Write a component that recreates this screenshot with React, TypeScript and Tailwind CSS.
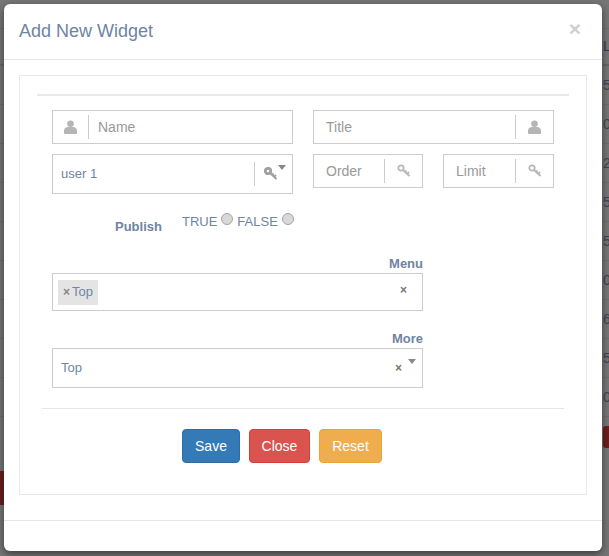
const ink = "text-[#6f84a3]";

const strip = ["5", "0", "2", "5", "5", "0", "6", "5", "0"];

function PersonIcon() {
  return (
    <svg width="13" height="14" viewBox="0 0 13 14" fill="#b5b5b5">
      <circle cx="6.5" cy="3.800" r="3.300" />
      <path d="M0 13v-2.500C0 8.500 1.500 7.700 3.500 7h6c2 .7 3.500 1.500 3.500 3.500V13a1 1 0 0 1-1 1H1a1 1 0 0 1-1-1z" />
    </svg>
  );
}

function KeyIcon({ dark }: { dark?: boolean }) {
  const c = dark ? "#a0a0a0" : "#b8b8b8";
  return (
    <svg width="14" height="14" viewBox="0 0 14 14" fill="none" stroke={c}>
      <circle cx="4" cy="4" r="2.700" strokeWidth={dark ? 2.800 : 1.800} />
      <path d="M6 6l6.500 6M10 10l2-2M8 8l1.500-1.500" strokeWidth="2" />
    </svg>
  );
}

function Caret() {
  return <span className="w-0 h-0 border-x-[4px] border-x-transparent border-t-[5px] border-t-[#888888]" />;
}

function IconInput({ label, width, icon, left }: { label: string; width: string; icon: React.ReactNode; left?: boolean }) {
  return (
    <div className={`${width} h-[34px] border border-[#cccccc] bg-white flex items-center`}>
      {left && <div className="w-[36px] h-[24px] border-r border-[#cccccc] flex items-center justify-center">{icon}</div>}
      <span className={`flex-1 text-[14px] text-[#999999] ${left ? "pl-[9px]" : "pl-[12px]"}`}>{label}</span>
      {!left && <div className="w-[38px] h-[24px] border-l border-[#cccccc] flex items-center justify-center">{icon}</div>}
    </div>
  );
}

export default function App() {
  return (
    <div className="relative w-[609px] h-[556px] bg-[#767676] overflow-hidden" style={{ fontFamily: '"Liberation Sans", Arial, sans-serif' }}>
      {/* page behind the modal, only the edges show */}
      <div className="flex justify-between">
        <div className="w-[8px]">
          <div className="h-[29px] border-b border-[#6c6c6c]" />
          <div className="h-[37px] border-b-2 border-[#666666]" />
          {strip.map((_, i) => (
            <div key={i} className="h-[39px] border-b border-[#6c6c6c]" />
          ))}
          <div className="h-[54px]" />
          <div className="h-[34px] bg-[#6b1f1d]" />
        </div>
        <div className="w-[6px] text-[14px] text-[#2f3b52] font-medium">
          <div className="h-[29px] border-b border-[#6c6c6c]" />
          <div className="h-[37px] border-b-2 border-[#666666] flex items-center">L</div>
          {strip.map((n, i) => (
            <div key={i} className="h-[39px] border-b border-[#6c6c6c] flex items-center text-[#3c4658]">{n}</div>
          ))}
          <div className="h-[9px]" />
          <div className="h-[22px] w-[12px] rounded-l-[3px] bg-[#6e1f1c]" />
        </div>
      </div>
      <div className="absolute left-[4px] top-[4px] w-[598px] h-[547px] bg-white rounded-[6px] shadow-[0_3px_9px_rgba(0,0,0,0.5)] flex flex-col">
        <header className="h-[56px] border-b border-[#e5e5e5] flex items-center justify-between pl-[15px] pr-[21px] shrink-0">
          <h4 className={`text-[18px] ${ink}`}>Add New Widget</h4>
          <span className="text-[21px] font-bold text-[#cfcfcf] leading-none -mt-[6px]">×</span>
        </header>
        <main className="h-[460px] shrink-0 px-[15px] pt-[15px]">
          <section className="h-[420px] border border-[#e7e7ee] px-[17px] pt-[18px]">
            <hr className="border-t-2 border-[#e6e9ee]" />
            <div className="pl-[15px] pt-[14px]">
              <div className="flex gap-[20px]">
                <IconInput label="Name" width="w-[241px]" icon={<PersonIcon />} left />
                <IconInput label="Title" width="w-[241px]" icon={<PersonIcon />} />
              </div>
              <div className="flex gap-[20px] mt-[10px] items-start">
                <div className="w-[241px] h-[40px] border border-[#cccccc] flex items-center relative">
                  <span className={`flex-1 pl-[8px] text-[13px] ${ink}`}>user 1</span>
                  <div className="w-[38px] h-[24px] border-l border-[#cccccc] flex items-center pl-[9px]"><KeyIcon dark /></div>
                  <span className="absolute right-[6px] top-[10px] flex"><Caret /></span>
                </div>
                <IconInput label="Order" width="w-[110px]" icon={<KeyIcon />} />
                <IconInput label="Limit" width="w-[111px]" icon={<KeyIcon />} />
              </div>
              <div className="flex mt-[19px] h-[30px]">
                <b className={`ml-[63px] mt-[4px] text-[13px] ${ink}`}>Publish</b>
                <div className={`ml-[20px] flex items-start gap-[4px] text-[13px] leading-[17px] ${ink}`}>
                  <span>TRUE</span>
                  <span className="w-[12px] h-[12px] rounded-full bg-[#d8d8d8] border border-[#a5a5a5]" />
                  <span>FALSE</span>
                  <span className="w-[12px] h-[12px] rounded-full bg-[#d8d8d8] border border-[#a5a5a5]" />
                </div>
              </div>
              <div className="w-[371px]">
                <div className={`text-right text-[13px] leading-[15px] font-bold ${ink} mt-[13px] mb-[2px]`}>Menu</div>
                <div className="h-[38px] border border-[#cccccc] flex items-center pl-[5px] pr-[15px] justify-between">
                  <span className={`h-[25px] w-[40px] bg-[#e4e4e4] text-[13px] ${ink} flex items-center pl-[5px] gap-[2px]`}>
                    <span className="text-[#888888] font-bold text-[12px]">×</span>Top
                  </span>
                  <span className="text-[12px] font-bold text-[#777777] mb-[4px]">×</span>
                </div>
                <div className={`text-right text-[13px] leading-[15px] font-bold ${ink} mt-[20px] mb-[2px]`}>More</div>
                <div className="h-[40px] border border-[#cccccc] flex items-center pl-[8px] relative">
                  <span className={`text-[13px] ${ink}`}>Top</span>
                  <span className="absolute right-[20px] top-[10px] text-[12px] font-bold text-[#777777]">×</span>
                  <span className="absolute right-[6px] top-[10px] flex"><Caret /></span>
                </div>
              </div>
            </div>
            <hr className="border-[#e5e5e5] mx-[5px] mt-[20px]" />
            <div className="flex justify-center gap-[9px] mt-[20px] mr-[42px]">
              <button className="h-[34px] w-[58px] rounded-[4px] bg-[#337ab7] border border-[#2e6da4] text-white text-[14px]">Save</button>
              <button className="h-[34px] w-[61px] rounded-[4px] bg-[#d9534f] border border-[#d43f3a] text-white text-[14px]">Close</button>
              <button className="h-[34px] w-[63px] rounded-[4px] bg-[#f0ad4e] border border-[#eea236] text-white text-[14px]">Reset</button>
            </div>
          </section>
        </main>
        <footer className="flex-1 border-t border-[#e5e5e5]" />
      </div>
    </div>
  );
}
